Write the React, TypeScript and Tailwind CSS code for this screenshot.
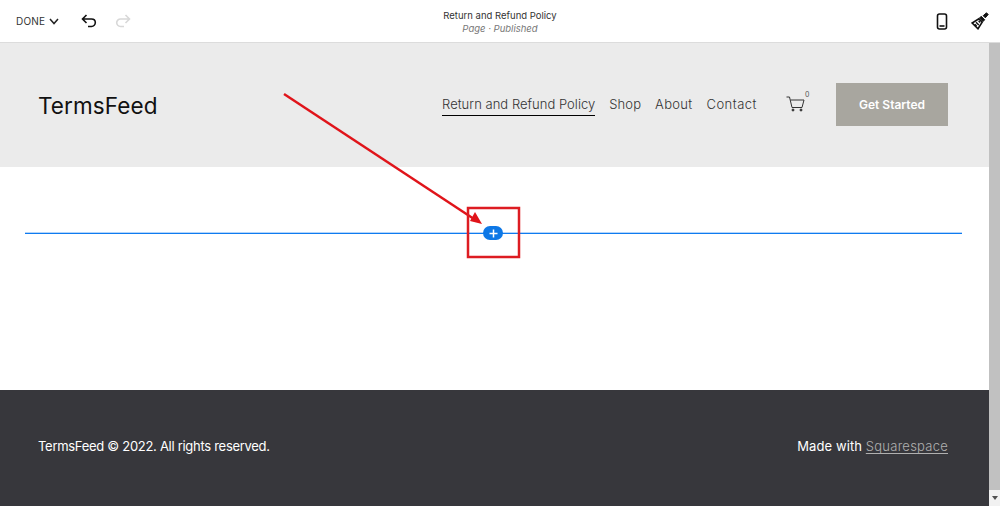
export default function App() {
  return (
    <div className="relative flex h-[506px] w-[1000px] flex-col overflow-hidden bg-white font-['Inter',sans-serif]">
      {/* editor toolbar */}
      <header className="relative flex h-[43px] shrink-0 items-center justify-between border-b border-[#dcdcdc] bg-white pl-[16px] pr-[11px]">
        <div className="flex items-center">
          <span className="text-[10px] tracking-[0.2px] text-[#333]">DONE</span>
          <svg className="ml-[4px]" width="10" height="7" viewBox="0 0 10 7" fill="none" stroke="#222" strokeWidth="1.5">
            <path d="M1 1l4 4.500L9 1" />
          </svg>
          <svg className="ml-[22px]" width="16" height="14" viewBox="0 0 16 14" fill="none" stroke="#111" strokeWidth="1.600">
            <path d="M5.500 1L1.500 5l4 4M1.500 5h9c2.200 0 3.800 1.600 3.800 3.600s-1.600 3.900-3.800 3.900H7" />
          </svg>
          <svg className="ml-[18px]" width="16" height="14" viewBox="0 0 16 14" fill="none" stroke="#d8d8d8" strokeWidth="1.600">
            <path d="M10.500 1l4 4-4 4M14.500 5h-9C3.300 5 1.700 6.600 1.700 8.600s1.600 3.900 3.800 3.900H9" />
          </svg>
        </div>
        <div className="absolute left-[350px] top-[9px] flex w-[300px] flex-col items-center leading-[13px]">
          <span className="text-[9.500px] text-[#333]">Return and Refund Policy</span>
          <span className="text-[9.500px] italic text-[#777]">Page · Published</span>
        </div>
        <div className="flex items-center gap-[23px]">
          <svg width="12" height="17" viewBox="0 0 12 17" fill="none" stroke="#111" strokeWidth="1.600">
            <rect x="1.500" y="1" width="9" height="15" rx="2" />
            <path d="M3.500 13h5" />
          </svg>
          <svg width="18" height="18" viewBox="0 0 18 18" fill="none" stroke="#111">
            <path d="M12.200 3.700L15.500 0.800 17.200 2.500 14.300 5.800Z" fill="#111" strokeWidth="1" />
            <path d="M10.200 4.300L13.700 7.800 12 9.500 8.500 6Z" fill="#111" strokeWidth="1" />
            <path d="M7.800 6.800L11.200 10.200 7 16.800 1.200 11Z" strokeWidth="1.600" />
            <path d="M5 10.200L7.800 13M7.600 8.800L9.200 10.400M3.800 12.200L5.600 14" strokeWidth="1.400" />
          </svg>
        </div>
      </header>

      <div className="flex min-h-0 flex-1">
        <main className="flex min-w-0 flex-1 flex-col">
          {/* site header */}
          <div className="flex h-[124px] shrink-0 items-center justify-between bg-[#ebebeb] pl-[38px] pr-[41px]">
            <span className="pt-[2px] text-[22.500px] tracking-[0.1px] text-[#111]">TermsFeed</span>
            <div className="flex items-center">
              <nav className="flex items-center gap-[14px] pt-[1px] text-[13px] font-light text-[#333]">
                <a className="border-b border-black pb-[1px] tracking-[0.03px]">Return and Refund Policy</a>
                <a className="pb-[2px] tracking-[0.1px]">Shop</a>
                <a className="pb-[2px] tracking-[0.3px]">About</a>
                <a className="pb-[2px] tracking-[0.5px]">Contact</a>
              </nav>
              <div className="relative ml-[29px] h-[18px] w-[19px]">
                <svg width="19" height="16" viewBox="0 0 19 16" fill="none" stroke="#333" strokeWidth="1">
                  <path d="M0.500 1H3.500L6 11.500H16L18 4H4.500" />
                  <circle cx="7" cy="14" r="1" fill="#333" />
                  <circle cx="15" cy="14" r="1" fill="#333" />
                </svg>
                <span className="absolute left-[19px] top-[-6px] text-[7px] text-[#555]">0</span>
              </div>
              <a className="mb-[1px] ml-[31px] flex h-[43px] w-[112px] items-center justify-center bg-[#a8a69f] text-[12px] font-semibold text-white">
                Get Started
              </a>
            </div>
          </div>

          {/* empty section with insert line */}
          <div className="flex h-[223px] shrink-0 flex-col bg-white pl-[25px] pr-[27px] pt-[65px]">
            <div className="relative h-[2px] border-t border-[#b5d5f9] bg-[#0f7bf0]">
              <div className="absolute left-[458px] top-[-7px] flex h-[14px] w-[20px] items-center justify-center rounded-full bg-[#0e78e6]">
                <svg width="9" height="9" viewBox="0 0 9 9" stroke="#fff" strokeWidth="1.500">
                  <path d="M4.500 0.500v8M0.500 4.500h8" />
                </svg>
              </div>
            </div>
          </div>

          {/* footer */}
          <footer className="flex flex-1 items-center justify-between bg-[#37373c] pb-[2px] pl-[38px] pr-[41px] text-[13px] text-white">
            <span className="tracking-[-0.29px]">TermsFeed © 2022. All rights reserved.</span>
            <span className="tracking-[0.1px]">
              Made with <span className="font-light tracking-[0.25px] text-[#b0b0b0] underline underline-offset-2">Squarespace</span>
            </span>
          </footer>
        </main>

        {/* browser scrollbar */}
        <div className="flex w-[11px] shrink-0 flex-col bg-[#f1f1f1]">
          <div className="h-[447px] bg-[#c1c1c1]" />
          <div className="flex flex-1 items-center justify-center">
            <div className="h-0 w-0 border-x-[3px] border-t-[4px] border-x-transparent border-t-[#505050]" />
          </div>
        </div>
      </div>

      {/* annotation drawn over the screenshot */}
      <svg className="absolute left-0 top-0" width="1000" height="506" fill="none">
        <path d="M284 94L474 219" stroke="#e0141a" strokeWidth="2.500" />
        <path d="M482 224L470 221L475 212Z" fill="#e0141a" />
        <rect x="468" y="208" width="51" height="49" stroke="#dd1c22" strokeWidth="2.500" />
      </svg>
    </div>
  )
}
